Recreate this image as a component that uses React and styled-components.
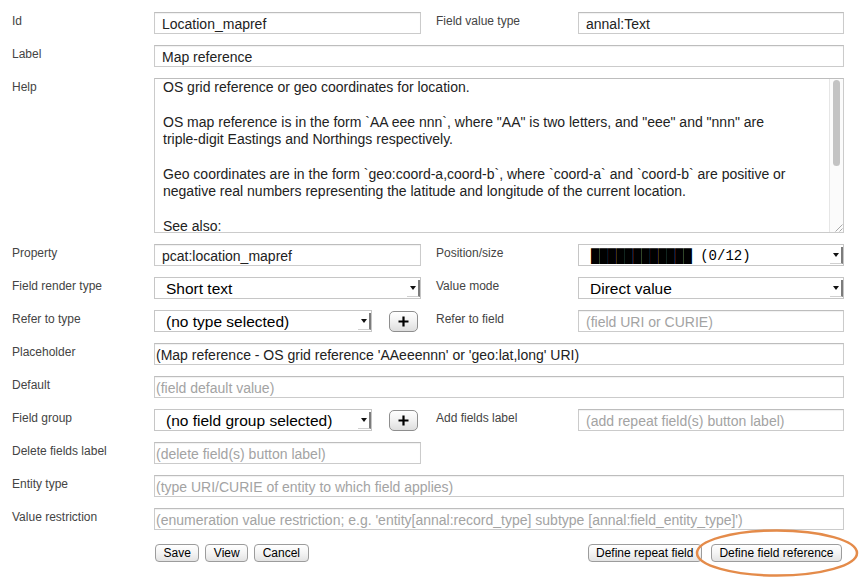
import React from 'react';
import styled, { createGlobalStyle } from 'styled-components';

const Global = createGlobalStyle`
  html, body { margin: 0; padding: 0; background: #fff; }
  body { font-family: "Liberation Sans", Arial, Helvetica, sans-serif; }
`;

const Form = styled.div`
  width: 859px;
  height: 577px;
  box-sizing: border-box;
  padding: 12px 15px 0 12px;
  display: flex;
  flex-direction: column;
  gap: 11px;
  overflow: hidden;
`;

const Row = styled.div`
  display: grid;
  grid-template-columns: 142px 267px 15px 142px 266px;
  align-items: start;
  margin-top: ${p => (p.$extra ? p.$extra : 0)}px;
`;

const Label = styled.div`
  grid-column: ${p => p.$col || 1};
  font-size: 12px;
  line-height: 14px;
  padding-top: 2px;
  color: #444;
  white-space: nowrap;
`;

const Cell = styled.div`
  grid-column: ${p => p.$span || 'auto'};
  display: flex;
  align-items: center;
  gap: 17px;
`;

const TextBox = styled.div`
  box-sizing: border-box;
  flex: 1;
  height: 22px;
  border: 1px solid #cbcbcb;
  border-top-color: #bdbdbd;
  box-shadow: inset 0 1px 1px rgba(0, 0, 0, 0.06);
  background: #fff;
  padding: 2px ${p => (p.$tight ? 1 : 7)}px 0;
  font-size: 14px;
  line-height: 18px;
  color: ${p => (p.$ph ? '#a3a3a3' : '#222')};
  white-space: nowrap;
  overflow: hidden;
`;

const HelpBox = styled.div`
  box-sizing: border-box;
  flex: 1;
  height: 155px;
  border: 1px solid #cbcbcb;
  border-top-color: #bdbdbd;
  background: #fff;
  display: flex;
`;

const HelpText = styled.div`
  flex: 1;
  padding: 0 8px;
  font-size: 14px;
  line-height: 17.4px;
  color: #222;
  white-space: pre-wrap;
  overflow: hidden;
`;

const ScrollTrack = styled.div`
  box-sizing: border-box;
  width: 14px;
  border-left: 1px solid #e6e6e6;
  background: #fbfbfb;
  display: flex;
  flex-direction: column;
  justify-content: space-between;
  align-items: flex-start;
  padding: 1px 0 0 3px;
`;

const Thumb = styled.div`
  width: 7px;
  height: 86px;
  border-radius: 4px;
  background: #c3c3c3;
`;

const Grip = styled.svg`
  align-self: flex-end;
  display: block;
`;

const Select = styled.div`
  box-sizing: border-box;
  flex: ${p => (p.$w ? '0 0 auto' : '1')};
  width: ${p => (p.$w ? `${p.$w}px` : 'auto')};
  height: 22px;
  border: 1px solid #c6c6c6;
  background: #fff;
  display: flex;
  align-items: center;
  justify-content: space-between;
  padding-left: ${p => (p.$mono ? 12 : 11)}px;
  padding-top: 1px;
  font-family: ${p => (p.$mono ? '"Liberation Mono", "DejaVu Sans Mono", monospace' : '"Liberation Sans", Arial, sans-serif')};
  font-size: ${p => (p.$mono ? 14 : 15.5)}px;
  color: #000;
  white-space: nowrap;
`;

const Arrow = styled.span`
  box-sizing: border-box;
  align-self: stretch;
  width: 13px;
  margin: 1px 0 1px 0;
  border-right: 2px solid #7c7c7c;
  border-bottom: 1px solid #d0d0d0;
  display: flex;
  align-items: center;
  justify-content: center;

  &::after {
    content: '';
    width: 0;
    height: 0;
    border-left: 3px solid transparent;
    border-right: 3px solid transparent;
    border-top: 4px solid #111;
  }
`;

const PlusButton = styled.div`
  box-sizing: border-box;
  width: 29px;
  height: 21px;
  border: 1px solid #8e8e8e;
  border-radius: 5px;
  background: linear-gradient(#ffffff, #f1f1f1 50%, #dedede);
  display: flex;
  align-items: center;
  justify-content: center;
`;

const ButtonBar = styled.div`
  grid-column: 2 / 6;
  display: flex;
  justify-content: space-between;
  align-items: center;
  padding: 0 2px 0 1px;
`;

const Group = styled.div`
  display: flex;
  gap: ${p => p.$gap}px;
`;

const Btn = styled.div`
  box-sizing: border-box;
  height: 18px;
  padding: 0 7.5px;
  border: 1px solid #9c9c9c;
  border-radius: 4px;
  background: linear-gradient(#ffffff, #f4f4f4 50%, #e3e3e3);
  font-size: 12px;
  line-height: 16px;
  color: #000;
  white-space: nowrap;
`;

const Highlight = styled.div`
  position: relative;
`;

const Ring = styled.svg`
  position: absolute;
  left: -20px;
  top: -16px;
  overflow: visible;
  pointer-events: none;
`;

const helpText = `OS grid reference or geo coordinates for location.

OS map reference is in the form \`AA eee nnn\`, where "AA" is two letters, and "eee" and "nnn" are
triple-digit Eastings and Northings respectively.

Geo coordinates are in the form \`geo:coord-a,coord-b\`, where \`coord-a\` and \`coord-b\` are positive or
negative real numbers representing the latitude and longitude of the current location.

See also:`;

const Plus = () => (
  <PlusButton>
    <svg width="11" height="11" viewBox="0 0 11 11">
      <path d="M5.5 0.5v10M0.5 5.5h10" stroke="#000" strokeWidth="2.2" fill="none" />
    </svg>
  </PlusButton>
);

export default function App() {
  return (
    <>
      <Global />
      <Form>
        <Row>
          <Label>Id</Label>
          <Cell $span="2"><TextBox>Location_mapref</TextBox></Cell>
          <Label $col="4">Field value type</Label>
          <Cell $span="5"><TextBox>annal:Text</TextBox></Cell>
        </Row>
        <Row>
          <Label>Label</Label>
          <Cell $span="2 / 6"><TextBox>Map reference</TextBox></Cell>
        </Row>
        <Row>
          <Label>Help</Label>
          <Cell $span="2 / 6">
            <HelpBox>
              <HelpText>{helpText}</HelpText>
              <ScrollTrack>
                <Thumb />
                <Grip width="10" height="10" viewBox="0 0 10 10">
                  <path d="M9.5 2.5L2.5 9.5M9.5 6.5L6.5 9.5" stroke="#a8a8a8" strokeWidth="1" fill="none" />
                </Grip>
              </ScrollTrack>
            </HelpBox>
          </Cell>
        </Row>
        <Row>
          <Label>Property</Label>
          <Cell $span="2"><TextBox>pcat:location_mapref</TextBox></Cell>
          <Label $col="4">Position/size</Label>
          <Cell $span="5">
            <Select $mono>
              <span>████████████ (0/12)</span>
              <Arrow />
            </Select>
          </Cell>
        </Row>
        <Row>
          <Label>Field render type</Label>
          <Cell $span="2">
            <Select><span>Short text</span><Arrow /></Select>
          </Cell>
          <Label $col="4">Value mode</Label>
          <Cell $span="5">
            <Select><span>Direct value</span><Arrow /></Select>
          </Cell>
        </Row>
        <Row>
          <Label>Refer to type</Label>
          <Cell $span="2">
            <Select $w={218}><span>(no type selected)</span><Arrow /></Select>
            <Plus />
          </Cell>
          <Label $col="4">Refer to field</Label>
          <Cell $span="5"><TextBox $ph>(field URI or CURIE)</TextBox></Cell>
        </Row>
        <Row>
          <Label>Placeholder</Label>
          <Cell $span="2 / 6">
            <TextBox $tight>(Map reference - OS grid reference 'AAeeennn' or 'geo:lat,long' URI)</TextBox>
          </Cell>
        </Row>
        <Row>
          <Label>Default</Label>
          <Cell $span="2 / 6"><TextBox $tight $ph>(field default value)</TextBox></Cell>
        </Row>
        <Row>
          <Label>Field group</Label>
          <Cell $span="2">
            <Select $w={218}><span>(no field group selected)</span><Arrow /></Select>
            <Plus />
          </Cell>
          <Label $col="4">Add fields label</Label>
          <Cell $span="5"><TextBox $ph>(add repeat field(s) button label)</TextBox></Cell>
        </Row>
        <Row>
          <Label>Delete fields label</Label>
          <Cell $span="2"><TextBox $tight $ph>(delete field(s) button label)</TextBox></Cell>
        </Row>
        <Row>
          <Label>Entity type</Label>
          <Cell $span="2 / 6">
            <TextBox $tight $ph>(type URI/CURIE of entity to which field applies)</TextBox>
          </Cell>
        </Row>
        <Row>
          <Label>Value restriction</Label>
          <Cell $span="2 / 6">
            <TextBox $tight $ph>
              (enumeration value restriction; e.g. 'entity[annal:record_type] subtype [annal:field_entity_type]')
            </TextBox>
          </Cell>
        </Row>
        <Row $extra={3}>
          <ButtonBar>
            <Group $gap={6}>
              <Btn>Save</Btn>
              <Btn>View</Btn>
              <Btn>Cancel</Btn>
            </Group>
            <Group $gap={9}>
              <Btn>Define repeat field</Btn>
              <Highlight>
                <Btn>Define field reference</Btn>
                <Ring width="170" height="50" viewBox="0 0 170 50">
                  <ellipse cx="86" cy="25" rx="80" ry="22.5" fill="none" stroke="#e48b4a" strokeWidth="2.5" />
                </Ring>
              </Highlight>
            </Group>
          </ButtonBar>
        </Row>
      </Form>
    </>
  );
}
